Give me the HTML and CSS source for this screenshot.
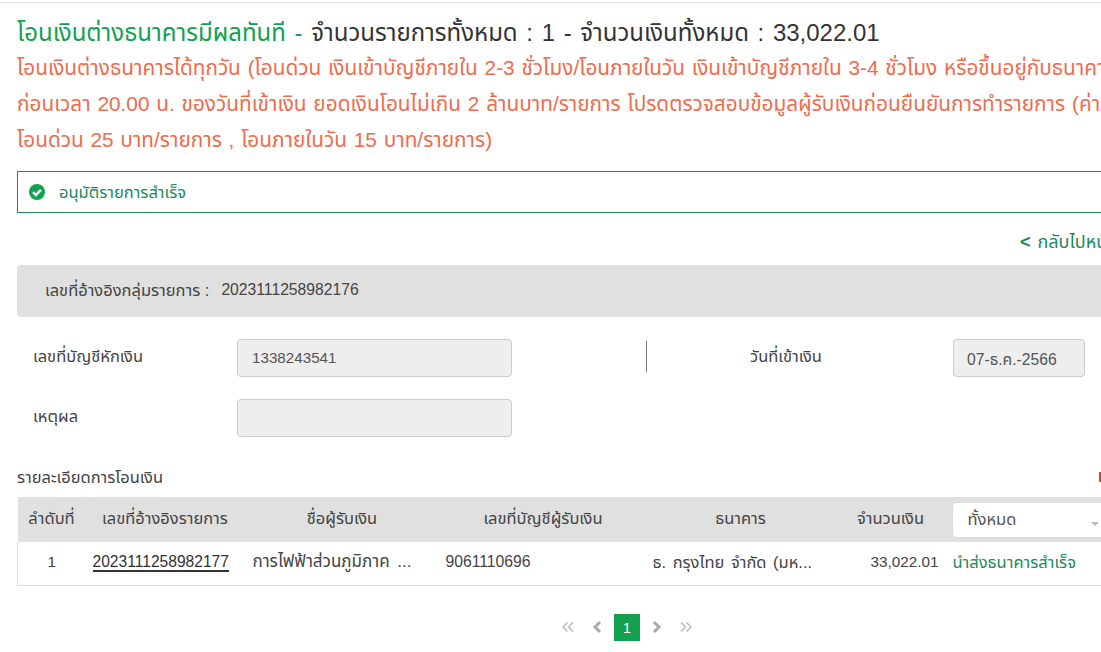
FILE: index.html
```html
<!DOCTYPE html>
<html lang="th">
<head>
<meta charset="utf-8">
<title>โอนเงินต่างธนาคารมีผลทันที</title>
<link rel="stylesheet" href="styles.css">
</head>
<body>
<main class="page">
  <h1 class="title"><span class="title-green">โอนเงินต่างธนาคารมีผลทันที -</span> จำนวนรายการทั้งหมด : 1 - จำนวนเงินทั้งหมด : 33,022.01</h1>
  <div class="notes">
    <p>โอนเงินต่างธนาคารได้ทุกวัน (โอนด่วน เงินเข้าบัญชีภายใน 2-3 ชั่วโมง/โอนภายในวัน เงินเข้าบัญชีภายใน 3-4 ชั่วโมง หรือขึ้นอยู่กับธนาคารปลายทาง</p>
    <p>ก่อนเวลา 20.00 น. ของวันที่เข้าเงิน ยอดเงินโอนไม่เกิน 2 ล้านบาท/รายการ โปรดตรวจสอบข้อมูลผู้รับเงินก่อนยืนยันการทำรายการ (ค่าธรรมเนียม</p>
    <p>โอนด่วน 25 บาท/รายการ , โอนภายในวัน 15 บาท/รายการ)</p>
  </div>
  <div class="alert">
    <svg class="alert-icon" viewBox="0 0 16 16" width="16" height="16" aria-hidden="true"><circle cx="8" cy="8" r="8" fill="#12a150"/><path d="M4 8.200l2.800 2.800L12 5.800" fill="none" stroke="#fff" stroke-width="2.400"/></svg>
    <span>อนุมัติรายการสำเร็จ</span>
  </div>
  <div class="back"><a href="#"><b>&lt;</b>กลับไปหน้าหลัก</a></div>
  <div class="group-ref"><span class="group-label">เลขที่อ้างอิงกลุ่มรายการ :</span><span class="digits">2023111258982176</span></div>
  <div class="form">
    <div class="form-row">
      <label class="field-label">เลขที่บัญชีหักเงิน</label>
      <div class="input input-wide">1338243541</div>
      <div class="divider"></div>
      <label class="date-label">วันที่เข้าเงิน</label>
      <div class="input input-date">07-ธ.ค.-2566</div>
    </div>
    <div class="form-row">
      <label class="field-label">เหตุผล</label>
      <div class="input input-wide"></div>
    </div>
  </div>
  <div class="section">รายละเอียดการโอนเงิน<i class="edge-mark"></i></div>
  <table class="grid">
    <colgroup><col class="c1"><col class="c2"><col class="c3"><col class="c4"><col class="c5"><col class="c6"><col class="c7"></colgroup>
    <thead>
      <tr>
        <th>ลำดับที่</th><th class="ref-head">เลขที่อ้างอิงรายการ</th><th>ชื่อผู้รับเงิน</th><th>เลขที่บัญชีผู้รับเงิน</th><th>ธนาคาร</th><th class="amount-head">จำนวนเงิน</th>
        <th class="filter-cell"><div class="select">ทั้งหมด<i class="caret"></i></div></th>
      </tr>
    </thead>
    <tbody>
      <tr>
        <td class="center">1</td>
        <td class="ref-cell"><a class="ref" href="#">2023111258982177</a></td>
        <td class="name">การไฟฟ้าส่วนภูมิภาค ...</td>
        <td class="acct">9061110696</td>
        <td class="bank">ธ. กรุงไทย จำกัด (มห...</td>
        <td class="amount">33,022.01</td>
        <td class="status">นำส่งธนาคารสำเร็จ</td>
      </tr>
    </tbody>
  </table>
  <nav class="pager">
    <svg class="pg" viewBox="0 0 14 14" width="14" height="14"><path d="M6.500 2.500L2 7l4.500 4.500M12 2.500L7.500 7l4.500 4.500" fill="none" stroke="#bbb" stroke-width="1.500"/></svg>
    <svg class="pg" viewBox="0 0 12 14" width="12" height="14"><path d="M9 2L4 7l5 5" fill="none" stroke="#aaa" stroke-width="3"/></svg>
    <span class="pg-current">1</span>
    <svg class="pg" viewBox="0 0 12 14" width="12" height="14"><path d="M3 2l5 5-5 5" fill="none" stroke="#aaa" stroke-width="3"/></svg>
    <svg class="pg" viewBox="0 0 14 14" width="14" height="14"><path d="M2 2.500L6.500 7 2 11.500M7.500 2.500L12 7l-4.500 4.500" fill="none" stroke="#bbb" stroke-width="1.500"/></svg>
  </nav>
</main>
</body>
</html>
```
FILE: styles.css
```css
* { box-sizing: border-box; }
html, body { margin: 0; padding: 0; background: #fff; }
body {
  width: 1101px;
  height: 652px;
  overflow: hidden;
  font-family: "Liberation Sans", Arial, "Noto Sans Thai", "Noto Sans", sans-serif;
  font-size: 16.5px;
  color: #444;
}
.page {
  width: 1240px;
  margin-top: 2px;
  border-top: 1px solid #ddd;
  padding: 13px 0 0 17px;
}
.title {
  margin: 0;
  height: 33px;
  line-height: 33px;
  font-size: 24px;
  font-weight: 400;
  word-spacing: 2px;
  white-space: nowrap;
  color: #333;
}
.title-green { color: #12a150; }
.notes { color: #ee6c4d; font-size: 20.800px; line-height: 36px; margin-top: 1px; word-spacing: 1px; }
.notes p { margin: 0; white-space: nowrap; }
.alert {
  margin-top: 13px;
  width: 1200px;
  height: 42px;
  border: 1px solid #1b8a5a;
  display: flex;
  align-items: center;
  gap: 14px;
  padding-left: 11px;
  color: #1b8a5a;
}
.alert-icon { flex: none; }
.back { margin-top: 19px; height: 21px; line-height: 21px; font-size: 18px; padding-left: 1003px; white-space: nowrap; }
.back a { color: #1b8a5a; text-decoration: none; display: flex; gap: 7px; }
.back b { font-size: 18px; }
.group-ref {
  margin-top: 12px;
  height: 52px;
  width: 1200px;
  background: #e0e0e0;
  border-radius: 4px;
  display: flex;
  align-items: center;
  gap: 12px;
  padding: 0 0 2px 28px;
}
.digits { font-size: 15.700px; }
.form { margin-top: 22px; display: flex; flex-direction: column; gap: 22px; }
.form-row { display: flex; align-items: center; height: 38px; }
.field-label { width: 220px; padding: 0 0 4px 16px; flex: none; }
.input {
  height: 38px;
  background: #eee;
  border: 1px solid #ccc;
  border-radius: 4px;
  line-height: 36px;
  padding-left: 14px;
  color: #555;
  font-size: 15.200px;
  flex: none;
}
.input-wide { width: 275px; }
.input-date { width: 132px; margin-left: 28px; padding-left: 13px; line-height: 40px; font-size: 15.700px; }
.divider { width: 1px; height: 31px; background: #777; margin: 0 0 3px 134px; flex: none; }
.date-label { width: 278px; padding-bottom: 4px; text-align: center; flex: none; }
.section { margin-top: 30px; height: 20px; line-height: 20px; position: relative; width: 1084px; }
.edge-mark { position: absolute; right: 0; top: 5px; width: 2px; height: 10px; background: #b5532a; }
.grid {
  margin-top: 10px;
  width: 1200px;
  table-layout: fixed;
  border-collapse: collapse;
}
.c1 { width: 68px; }
.c2 { width: 163px; }
.c3 { width: 187px; }
.c4 { width: 215px; }
.c5 { width: 180px; }
.c6 { width: 116px; }
.grid th {
  height: 45px;
  background: #e0e0e0;
  font-weight: 400;
  padding: 0 0 2px;
  text-align: center;
}
.grid .ref-head { padding-right: 4px; }
.grid .amount-head { padding-left: 4px; }
.grid td { height: 43px; padding: 0 0 2px; border-bottom: 1px solid #ddd; white-space: nowrap; }
.grid tbody td:first-child { border-left: 1px solid #ddd; }
.grid .center { text-align: center; font-size: 15.300px; }
.grid .ref-cell { padding-left: 7px; font-size: 15.600px; }
.ref { color: #333; text-decoration: none; border-bottom: 2px solid #333; }
.grid .name { padding-left: 4px; font-size: 17px; word-spacing: 3px; }
.grid .acct { padding-left: 10px; font-size: 15.700px; }
.grid .bank { padding-left: 2px; word-spacing: 2px; }
.grid .amount { text-align: right; padding-right: 8px; font-size: 15.300px; }
.grid .status { color: #1b8a5a; padding-left: 6px; }
.grid .filter-cell { text-align: left; padding: 0 0 0 5px; }
.select {
  width: 160px;
  height: 36px;
  background: #fff;
  border: 1px solid #ddd;
  border-radius: 4px;
  line-height: 33px;
  padding-left: 15px;
  color: #555;
  position: relative;
}
.caret {
  position: absolute;
  left: 138px;
  top: 19px;
  border-left: 4px solid transparent;
  border-right: 4px solid transparent;
  border-top: 4px solid #bbb;
}
.pager {
  margin-top: 28px;
  margin-left: 536px;
  display: flex;
  align-items: center;
  height: 27px;
}
.pg { flex: none; margin: 0 8px; }
.pg-current {
  width: 26px;
  height: 27px;
  background: #12a150;
  color: #fff;
  font-size: 15px;
  text-align: center;
  line-height: 27px;
  margin: 0 3px;
}
```
